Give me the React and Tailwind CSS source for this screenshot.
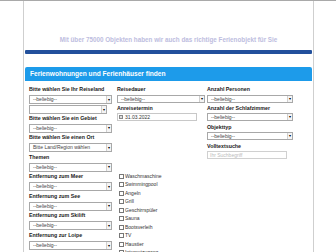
import React from 'react';

const FONT = "font-['Liberation_Sans',Arial,sans-serif]";

function Select({ value = '', w = 'w-[83px]', h = 'h-[9px]', muted = false }) {
  return (
    <div className={`${w} ${h} flex items-center border border-[#a8a8a8] bg-white`}>
      <span className={`flex-1 pl-[3px] text-[5px] leading-none whitespace-nowrap overflow-hidden ${muted ? 'text-[#555]' : 'text-[#444]'}`}>{value}</span>
      <span className="w-[5px] h-full flex items-center justify-center border-l border-[#d0d0d0] bg-[#f4f4f4] text-[4px] leading-none text-black">▾</span>
    </div>
  );
}

function Label({ children }) {
  return <p className="h-[6px] text-[5.3px] leading-[6px] font-bold text-[#1a1a1a] whitespace-nowrap">{children}</p>;
}

const AUSSTATTUNG = ['Waschmaschine', 'Swimmingpool', 'Angeln', 'Grill', 'Geschirrspüler', 'Sauna', 'Bootsverleih', 'TV', 'Haustier', 'Internetzugang'];

export default function App() {
  const col1 = [
    ['Bitte wählen Sie ein Gebiet', '--beliebig--'],
    ['Bitte wählen Sie einen Ort', 'Bitte Land/Region wählen'],
    ['Themen', '--beliebig--'],
    ['Entfernung zum Meer', '--beliebig--'],
    ['Entfernung zum See', '--beliebig--'],
    ['Entfernung zum Skilift', '--beliebig--'],
    ['Entfernung zur Loipe', '--beliebig--'],
  ];

  return (
    <div className={`w-[336px] h-[252px] overflow-hidden bg-white border-t border-[#a9a9a9] ${FONT}`}>
      <div className="ml-[23px] w-[291px] h-full border-x border-[#cfcfcf]">
        {/* Slogan */}
        <p className="pt-[36px] h-[43px] text-center text-[6.3px] leading-[6px] font-bold text-[#bdbde0]">
          Mit über 75000 Objekten haben wir auch das richtige Ferienobjekt für Sie
        </p>
        <div className="mx-[1px] mt-[6px] h-[4px] rounded-[1px] bg-[#22509c]" />

        {/* Suche */}
        <div className="mx-[1px] mt-[13px] h-[14px] rounded-t-[2px] bg-[#1d9bea] flex items-center pl-[5px]">
          <span className="text-[6.6px] leading-none font-bold text-white">Ferienwohnungen und Ferienhäuser finden</span>
        </div>

        <div className="flex pl-[5px] pt-[5px]">
          {/* Spalte 1 */}
          <div className="w-[88px] flex flex-col">
            <Label>Bitte wählen Sie Ihr Reiseland</Label>
            <div className="mt-[3px]"><Select value="--beliebig--" /></div>
            <div className="mt-[1px]"><Select w="w-[78px]" /></div>
            {col1.map(([l, v], i) => (
              <div key={l} className={`${i === 0 ? 'mt-[0.5px]' : 'mt-[1.6px]'} flex flex-col`}>
                <Label>{l}</Label>
                <div className="mt-[3px]"><Select value={v} /></div>
              </div>
            ))}
          </div>

          {/* Spalte 2 */}
          <div className="w-[90px] flex flex-col">
            <Label>Reisedauer</Label>
            <div className="mt-[3px]"><Select value="--beliebig--" w="w-[88px]" h="h-[8px]" /></div>
            <div className="mt-[2px]"><Label>Anreisetermin</Label></div>
            <div className="mt-[2px] w-[80px] h-[8px] flex items-center gap-[2px] border border-[#c8c8c8] pl-[1px]">
              <span className="w-[4px] h-[4px] border border-[#888] bg-[#ddd]" />
              <span className="text-[5px] leading-none text-[#333]">31.03.2022</span>
            </div>
            <div className="mt-[52px] flex flex-col gap-[2.5px] pl-[2px]">
              {AUSSTATTUNG.map((a) => (
                <label key={a} className="h-[6px] flex items-center gap-[1px]">
                  <span className="w-[5px] h-[5px] border border-[#777] bg-white" />
                  <span className="text-[5px] leading-none text-[#333]">{a}</span>
                </label>
              ))}
            </div>
          </div>

          {/* Spalte 3 */}
          <div className="flex flex-col">
            <Label>Anzahl Personen</Label>
            <div className="mt-[3px]"><Select value="--beliebig--" w="w-[86px]" h="h-[8px]" /></div>
            <div className="mt-[2px]"><Label>Anzahl der Schlafzimmer</Label></div>
            <div className="mt-[2px]"><Select value="--beliebig--" w="w-[86px]" h="h-[8px]" /></div>
            <div className="mt-[3px]"><Label>Objekttyp</Label></div>
            <div className="mt-[2px]"><Select value="--beliebig--" w="w-[86px]" h="h-[8px]" /></div>
            <div className="mt-[3px]"><Label>Volltextsuche</Label></div>
            <div className="mt-[2px] w-[80px] h-[8px] flex items-center border border-[#d0d0d0] pl-[2px]">
              <span className="text-[5px] leading-none text-[#bbb]">Ihr Suchbegriff</span>
            </div>
          </div>
        </div>
      </div>
    </div>
  );
}
